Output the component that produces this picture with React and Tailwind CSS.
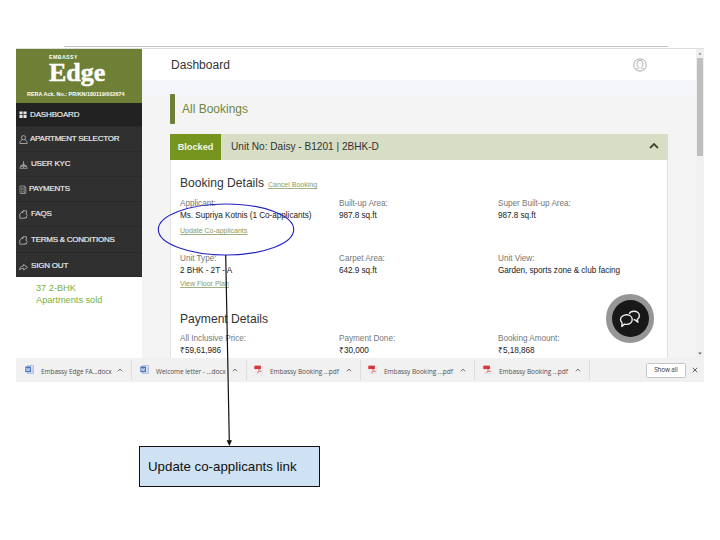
import React from "react";

const icon = "h-[9px] w-[9px] shrink-0 fill-none stroke-[#bdbdbd]";

const menu = [
  {
    label: "DASHBOARD", row: "h-[24px] bg-[#222222]", text: "ml-[3px] text-[8px] tracking-[-0.15px]",
    svg: <svg viewBox="0 0 9 9" className="h-[9px] w-[8px] shrink-0 fill-[#e8e8e8]"><path d="M.5 1h3.5v3.2H.5zM5 1h3.5v3.2H5zM.5 5.2h3.5v3.3H.5zM5 5.2h3.5v3.3H5z" /></svg>,
  },
  {
    label: "APARTMENT SELECTOR", row: "h-[25px]", text: "ml-[2px] text-[8px] tracking-[-0.25px]",
    svg: <svg viewBox="0 0 9 9" className={icon} strokeWidth=".8"><circle cx="4.5" cy="2.7" r="2.1" /><path d="M3.3 4.6C1.5 5.5.8 6.7.8 8.5h7.4c0-1.8-.7-3-2.5-3.9" /></svg>,
  },
  {
    label: "USER KYC", row: "h-[25px]", text: "ml-[3px] text-[8px] tracking-[-0.2px]",
    svg: <svg viewBox="0 0 9 9" className={icon} strokeWidth=".7"><path d="M4.5 1v1M3 7l1.5-4.5L6 7M.5 8.3h8M1 8l1.2-3L3 7M8 8L6.8 5 6 7M4.5 4v4" /></svg>,
  },
  {
    label: "PAYMENTS", row: "h-[25px]", text: "ml-[2px] text-[8px] tracking-[-0.25px]",
    svg: <svg viewBox="0 0 8 9" className="h-[9px] w-[8px] shrink-0 fill-none stroke-[#aaaaaa]" strokeWidth=".7"><path d="M1 1h4.8v7.3H1zM5.8 2h1v6.3H2M2 3h2.8M2 4.7h2.8M2 6.4h1.4M4 6.4h.8" /></svg>,
  },
  {
    label: "FAQS", row: "h-[25px]", text: "ml-[3px] text-[8px] tracking-[-0.15px]",
    svg: <svg viewBox="0 0 9 9" className={icon} strokeWidth=".8"><path d="M2.5 2.5L4 .8h3.5v2.5M2.5 2.5H4V.8M2.5 2.5L.8 4v4.2h5.4V7M6.4 3.8h1.2v1l.8.7-.8.7v1.6H6.4" /></svg>,
  },
  {
    label: "TERMS & CONDITIONS", row: "h-[26px] pt-[1px]", text: "ml-[3px] text-[8px] tracking-[-0.25px]",
    svg: <svg viewBox="0 0 9 9" className={icon} strokeWidth=".8"><path d="M2.5 2.5L4 .8h3.5v2.5M2.5 2.5H4V.8M2.5 2.5L.8 4v4.2h5.4V7M6.4 3.8h1.2v1l.8.7-.8.7v1.6H6.4" /></svg>,
  },
  {
    label: "SIGN OUT", row: "h-[24px] pt-[3px]", text: "ml-[3px] text-[8px] tracking-[-0.2px]",
    svg: <svg viewBox="0 0 9 9" className={icon} strokeWidth=".8"><path d="M.5 8c.2-2.7 1.5-4 4.1-4V2.5L8.5 5.3 4.6 8V6.4C2.7 6.3 1.4 6.8.5 8z" /></svg>,
  },
];

function Sidebar() {
  return (
    <aside className="flex w-[126px] shrink-0 flex-col bg-white">
      <div className="flex h-[54px] flex-col bg-[#6d8035] text-white">
        <div className="mt-[5px] ml-[33px] h-[6px] text-[5.2px] leading-[6px] font-bold tracking-[0.45px]">EMBASSY</div>
        <div className="mt-[1px] ml-[33px] h-[24px] w-[54px] font-['Liberation_Serif',serif] text-[26px] leading-[24px] font-bold [-webkit-text-stroke:0.5px_white]">Edge</div>
        <div className="mt-[6px] ml-[11px] h-[7px] whitespace-nowrap text-[5.45px] leading-[7px] font-bold">RERA Ack. No.: PR/KN/180119/002674</div>
      </div>
      <nav className="bg-[#303030]">
        {menu.map((m) => (
          <div key={m.label} className={`flex items-center border-b border-[#292929] pl-[3px] ${m.row}`}>
            {m.svg}
            <span className={`whitespace-nowrap text-[#f2f2f2] [-webkit-text-stroke:0.15px_#f2f2f2] ${m.text}`}>{m.label}</span>
          </div>
        ))}
      </nav>
      <div className="pt-[5px] pl-[20px] text-[9.2px] leading-[12px] text-[#78b13b]">
        <div>37 2-BHK</div>
        <div>Apartments sold</div>
      </div>
    </aside>
  );
}

function Field({ label, value, link }) {
  return (
    <div className="h-[55px] whitespace-nowrap">
      <div className="h-[12px] text-[8.2px] leading-[13px] tracking-[-0.02px] text-[#777777]">{label}</div>
      <div className="h-[13px] text-[8.2px] leading-[13px] tracking-[-0.04px] text-[#222222]">{value}</div>
      {link}
    </div>
  );
}

const linkClass = "text-[#8a9b63] underline underline-offset-1 decoration-[#a3b083]";

function Card() {
  return (
    <section className="flex h-[224px] w-[498px] flex-col">
      <header className="flex h-[26px] shrink-0 items-center bg-[#d8ddc5]">
        <div className="flex h-[26px] w-[51px] items-center justify-center bg-[#75951f] pt-[1px] text-[9.2px] font-bold text-[#f1f5e5]">Blocked</div>
        <div className="ml-[10px] flex-1 text-[10.1px] text-[#333333]">Unit No: Daisy - B1201 | 2BHK-D</div>
        <svg viewBox="0 0 10 8" className="mr-[9px] h-[8px] w-[10px] -translate-y-px fill-none stroke-[#3e4a2b]" strokeWidth="1.8"><path d="M1 6l4-4 4 4" /></svg>
      </header>
      <div className="flex-1 overflow-hidden border-x border-[#e2e2e2] bg-white pl-[9px]">
        <div className="mt-[15px] flex h-[17px] items-baseline whitespace-nowrap text-[12.1px] leading-[17px] text-[#333333]">
          Booking Details
          <span className={`ml-[4px] text-[7px] ${linkClass}`}>Cancel Booking</span>
        </div>
        <div className="mt-[5px] grid grid-cols-[159px_159px_1fr]">
          <Field label="Applicant:" value="Ms. Supriya Kotnis (1 Co-applicants)" link={<div className={`mt-[3px] text-[7px] leading-[11px] ${linkClass}`}>Update Co-applicants</div>} />
          <Field label="Built-up Area:" value="987.8 sq.ft" />
          <Field label="Super Built-up Area:" value="987.8 sq.ft" />
          <Field label="Unit Type:" value="2 BHK - 2T - A" link={<div className={`mt-[1px] text-[7px] leading-[11px] ${linkClass}`}>View Floor Plan</div>} />
          <Field label="Carpet Area:" value="642.9 sq.ft" />
          <Field label="Unit View:" value="Garden, sports zone & club facing" />
        </div>
        <div className="mt-[4px] h-[17px] text-[12.1px] leading-[17px] text-[#333333]">Payment Details</div>
        <div className="mt-[4px] grid grid-cols-[159px_159px_1fr]">
          <Field label="All Inclusive Price:" value="₹59,61,986" />
          <Field label="Payment Done:" value="₹30,000" />
          <Field label="Booking Amount:" value="₹5,18,868" />
        </div>
      </div>
    </section>
  );
}

const files = [
  { name: "Embassy Edge FA...docx", kind: "doc", width: "w-[115px]" },
  { name: "Welcome letter - ...docx", kind: "doc", width: "w-[114px]" },
  { name: "Embassy Booking ...pdf", kind: "pdf", width: "w-[114px]" },
  { name: "Embassy Booking ...pdf", kind: "pdf", width: "w-[115px]" },
  { name: "Embassy Booking ...pdf", kind: "pdf", width: "w-[115px]" },
];

function FileIcon({ kind }) {
  return kind === "doc" ? (
    <svg viewBox="0 0 9 9" className="h-[9px] w-[9px] shrink-0 -translate-y-px"><path d="M2.5.5h6v8h-6z" fill="#e7eef9" stroke="#8aa7d5" strokeWidth=".6" /><path d="M6.5 3h1.5M6.5 5h1.5M6.5 7h1.5" stroke="#7895c8" strokeWidth=".6" /><path d="M.3 1.5h5.7v5.7H.3z" fill="#4a75bd" /><path d="M1.3 3l.8 3 .9-2.6.9 2.6.8-3" fill="none" stroke="#fff" strokeWidth=".6" /></svg>
  ) : (
    <svg viewBox="0 0 9 9" className="h-[9px] w-[9px] shrink-0 -translate-y-px"><path d="M2 .4h4.7l1.5 1.7v6.4H2z" fill="#fafafa" stroke="#d2d2d2" strokeWidth=".5" /><path d="M.3.7h6.6v3.4H.3z" fill="#d6353b" /><path d="M3.4 7.5c1-1 1.6-2.2 1.5-3.3.5 1.3 1.3 2.1 2.6 2.2-1.4-.1-2.7.3-4.1 1.1z" fill="none" stroke="#db6262" strokeWidth=".8" /></svg>
  );
}

function DownloadBar() {
  return (
    <footer className="flex h-[24px] items-center bg-[#f1f1f1] pl-[9px] font-['Open_Sans','Noto_Sans',sans-serif]">
      {files.map((f, i) => (
        <div key={i} className={`flex h-[24px] shrink-0 items-center ${f.width}`}>
          <FileIcon kind={f.kind} />
          <span className="mt-[3px] ml-[7px] w-[74px] whitespace-nowrap text-[6.5px] tracking-[-0.05px] text-[#505050]">{f.name}</span>
          <svg viewBox="0 0 6 4" className="ml-[2px] h-[4px] w-[6px] fill-none stroke-[#666666]" strokeWidth=".9"><path d="M.8 3.3L3 1l2.2 2.3" /></svg>
          <div className="ml-[8px] h-[20px] w-px bg-[#dddddd]" />
        </div>
      ))}
      <div className="ml-auto mr-[6px] flex h-[15px] w-[40px] items-center justify-center rounded-[1.5px] border border-[#c5c5c5] bg-white text-[6.3px] tracking-[-0.1px] text-[#333333]">Show all</div>
      <svg viewBox="0 0 6 6" className="mr-[6px] h-[6px] w-[6px] stroke-[#555555]" strokeWidth=".9"><path d="M.7.7l4.6 4.6M5.3.7L.7 5.3" /></svg>
    </footer>
  );
}

function Browser() {
  return (
    <div className="flex h-[336px] w-[688px] flex-col">
      <div className="h-[3px] shrink-0 border-b border-[#dedede] bg-white">
        <div className="ml-[48px] h-px w-[604px] bg-[#c4c7c4]" />
      </div>
      <div className="flex h-[309px] shrink-0 overflow-hidden">
        <Sidebar />
        <main className="flex-1 bg-[#f4f4f4]">
          <header className="flex h-[31px] items-center justify-between bg-white pr-[49px] pl-[29px] text-[12px] text-[#333333]">
            <span className="tracking-[0.02px]">Dashboard</span>
            <svg viewBox="0 0 14 14" className="h-[14px] w-[14px] fill-none stroke-[#999999]" strokeWidth=".8"><circle cx="7" cy="7" r="6.2" /><path d="M2.8 11.2c.7-.7 2.9-.5 2.9-1.6C4.4 8.5 4 7.2 4 5.5c0-2 1.2-3.1 3-3.1s3 1.1 3 3.1c0 1.7-.4 3-1.7 4.1 0 1.1 2.2.9 2.9 1.6" /></svg>
          </header>
          <div className="h-[15px] bg-[#f4f5fa]" />
          <div className="-mt-px ml-[28px] flex h-[40px] items-start">
            <div className="h-[30px] w-[5px] rounded-[1px] bg-[#6d8038]" />
            <h1 className="ml-[7px] text-[12px] leading-[30px] text-[#72873f]">All Bookings</h1>
          </div>
          <div className="ml-[28px]"><Card /></div>
        </main>
        <div className="flex w-[8px] shrink-0 flex-col items-center bg-[#f0f0f0]">
          <svg viewBox="0 0 8 9" className="h-[9px] w-[8px] fill-[#888888]"><path d="M2.3 5.5h3.4L4 3.6z" /></svg>
          <div className="h-[98px] w-[6px] bg-[#bfbfbf]" />
          <svg viewBox="0 0 8 9" className="mt-auto h-[9px] w-[8px] fill-[#555555]"><path d="M2.3 3.5h3.4L4 5.4z" /></svg>
        </div>
      </div>
      <DownloadBar />
    </div>
  );
}

export default function App() {
  return (
    <div className="relative h-[540px] w-[720px] overflow-hidden bg-white pt-[46px] pl-[16px] font-['Liberation_Sans',Arial,sans-serif]">
      <Browser />
      <div className="mt-[64px] ml-[123px] flex h-[41px] w-[181px] items-center border border-[#111111] bg-[#cfe2f3] pl-[8px] text-[13.3px] text-[#111111]">Update co-applicants link</div>
      <div className="absolute top-[294px] left-[606px] flex h-[49px] w-[48px] items-center justify-center rounded-full bg-[#969696]">
        <div className="flex h-[37px] w-[37px] items-center justify-center rounded-full bg-[#181818]">
          <svg viewBox="0 0 24 20" className="h-[20px] w-[24px] fill-none stroke-[#eeeeee]" strokeWidth="1.4" strokeLinejoin="round"><path d="M8.6 5.8c3.3 0 5.6 2.1 5.6 4.8s-2.4 4.8-5.6 4.8c-.7 0-1.4-.1-2-.3l-2.8 2.3.3-3.7C3.1 12.900 2.500 11.800 2.500 10.600c0-2.700 2.700-4.800 6.100-4.800z" /><path d="M11.200 4.800c.7-1.600 2.500-2.600 4.700-2.600 3.100 0 5.500 2 5.500 4.500 0 1.500-.8 2.800-2.100 3.600l.6 3-3.100-2.500h-1.200" /></svg>
        </div>
      </div>
      <svg viewBox="0 0 720 540" className="pointer-events-none absolute inset-0 h-[540px] w-[720px] fill-none">
        <ellipse cx="226" cy="229.5" rx="67.7" ry="25.5" stroke="#2424c2" strokeWidth="1.15" />
        <path d="M225.7 255L229.3 441" stroke="#111111" strokeWidth="1.2" />
        <path d="M227 440.5h4.6l-2.2 5z" fill="#111111" stroke="#111111" strokeWidth=".5" />
      </svg>
    </div>
  );
}
